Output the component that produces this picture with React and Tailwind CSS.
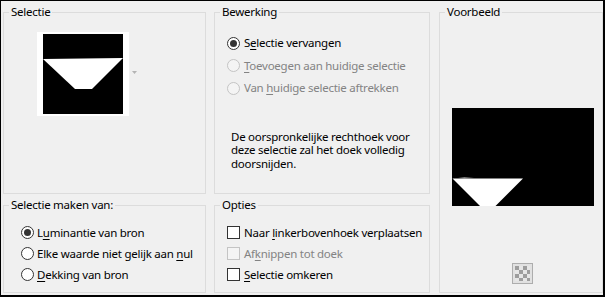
import React from "react";

function Radio({ checked, disabled }) {
  return (
    <span
      className={`flex h-[13px] w-[13px] shrink-0 items-center justify-center rounded-full border ${
        disabled ? "border-[#c4c4c4] bg-[#f4f4f4]" : "border-[#333333] bg-white"
      }`}
    >
      {checked && <span className="h-[7px] w-[7px] rounded-full bg-[#333333]" />}
    </span>
  );
}

function Check({ disabled }) {
  return (
    <span
      className={`block h-[13px] w-[13px] shrink-0 border ${
        disabled ? "border-[#c4c4c4] bg-[#f4f4f4]" : "border-[#333333] bg-white"
      }`}
    />
  );
}

function Legend({ children }) {
  return (
    <legend className="ml-[5px] whitespace-nowrap px-[2px] text-[11.5px] leading-[16px] text-black">{children}</legend>
  );
}

function Checker() {
  const cells = [];
  for (let r = 0; r < 4; r++) {
    for (let c = 0; c < 4; c++) {
      if ((r + c) % 2 === 0) cells.push(<rect key={`${r}-${c}`} x={c * 4} y={r * 4} width="4" height="4" fill="#9d9d9d" />);
    }
  }
  return (
    <svg width="15" height="15" viewBox="0 0 15 15" className="block">
      <rect width="15" height="15" fill="#e6e6e6" />
      {cells}
    </svg>
  );
}

export default function App() {
  return (
    <div className="h-[297px] w-[605px] overflow-hidden border-t border-l border-r-2 border-b-2 border-black bg-[#f0f0f0] font-['Noto_Sans',sans-serif] text-[11.5px] tracking-[-0.25px] text-black">
      <div className="flex pl-[2px] pt-[3px]">
        {/* Left column */}
        <div className="flex w-[203px] flex-col gap-[3px]">
          <fieldset className="h-[190px] w-[203px] border border-[#dcdcdc]">
            <Legend>Selectie</Legend>
            <div className="ml-[33px] mt-[12px] flex items-center">
              <div className="bg-white px-[6px] py-[2px]">
                <svg width="80" height="80" viewBox="0 0 80 80" className="block">
                  <rect width="80" height="80" fill="#000" />
                  <polygon points="0,25 80,24 49,55 32,55" fill="#fff" />
                </svg>
              </div>
              <svg width="5" height="3" viewBox="0 0 5 3" className="mb-[3px] ml-[3px]">
                <polygon points="0,0 5,0 2.5,3" fill="#b4b4b4" />
              </svg>
            </div>
          </fieldset>
          <fieldset className="h-[96px] w-[203px] border border-[#dcdcdc]">
            <Legend>Selectie maken van:</Legend>
            <div className="mt-[9px] flex flex-col whitespace-nowrap pl-[17px]">
              <div className="flex h-[21px] items-center gap-[3px]">
                <Radio checked />
                <span>L<u className="underline-offset-2">u</u>minantie van bron</span>
              </div>
              <div className="flex h-[21px] items-center gap-[3px]">
                <Radio />
                <span>Elke waarde niet gelijk aan <u className="underline-offset-2">n</u>ul</span>
              </div>
              <div className="flex h-[21px] items-center gap-[3px]">
                <Radio />
                <span><u className="underline-offset-2">D</u>ekking van bron</span>
              </div>
            </div>
          </fieldset>
        </div>

        {/* Middle column */}
        <div className="ml-[8px] flex w-[216px] flex-col gap-[3px]">
          <fieldset className="h-[190px] w-[216px] border border-[#dcdcdc]">
            <Legend>Bewerking</Legend>
            <div className="mt-[12px] flex flex-col whitespace-nowrap pl-[12px]">
              <div className="flex h-[22px] items-center gap-[4px]">
                <Radio checked />
                <span>S<u className="underline-offset-2">e</u>lectie vervangen</span>
              </div>
              <div className="flex h-[23px] items-center gap-[4px] text-[#838383]">
                <Radio disabled />
                <span><u className="underline-offset-2">T</u>oevoegen aan huidige selectie</span>
              </div>
              <div className="flex h-[22px] items-center gap-[4px] text-[#838383]">
                <Radio disabled />
                <span>Van <u className="underline-offset-2">h</u>uidige selectie aftrekken</span>
              </div>
            </div>
            <p className="mt-[31px] whitespace-nowrap pl-[16px] leading-[13.3px]">
              De oorspronkelijke rechthoek voor
              <br />
              deze selectie zal het doek volledig
              <br />
              doorsnijden.
            </p>
          </fieldset>
          <fieldset className="h-[96px] w-[216px] border border-[#dcdcdc]">
            <Legend>Opties</Legend>
            <div className="mt-[9px] flex flex-col whitespace-nowrap pl-[12px]">
              <div className="flex h-[21px] items-center gap-[4px]">
                <Check />
                <span>Naar <u className="underline-offset-2">l</u>inkerbovenhoek verplaatsen</span>
              </div>
              <div className="flex h-[21px] items-center gap-[4px] text-[#838383]">
                <Check disabled />
                <span>Af<u className="underline-offset-2">k</u>nippen tot doek</span>
              </div>
              <div className="flex h-[21px] items-center gap-[4px]">
                <Check />
                <span><u className="underline-offset-2">S</u>electie omkeren</span>
              </div>
            </div>
          </fieldset>
        </div>

        {/* Right column */}
        <fieldset className="ml-[9px] h-[289px] w-[164px] border border-[#dcdcdc]">
          <Legend>Voorbeeld</Legend>
          <div className="ml-[12px] mt-[88px]">
            <svg width="142" height="98" viewBox="0 0 142 98" className="block">
              <defs>
                <linearGradient id="sm" x1="0" x2="1" y1="0" y2="0">
                  <stop offset="0" stopColor="#000" />
                  <stop offset="0.4" stopColor="#777" />
                  <stop offset="1" stopColor="#000" />
                </linearGradient>
              </defs>
              <rect width="142" height="98" fill="#000" />
              <rect x="6" y="69" width="16" height="1.5" fill="url(#sm)" />
              <polygon points="0.5,70.5 71,70.5 43.5,98 28,98" fill="#fff" />
            </svg>
          </div>
          <div className="ml-[72px] mt-[57px] h-[21px] w-[21px] border border-[#adadad] bg-[#e1e1e1] p-[2px]">
            <Checker />
          </div>
        </fieldset>
      </div>
    </div>
  );
}
